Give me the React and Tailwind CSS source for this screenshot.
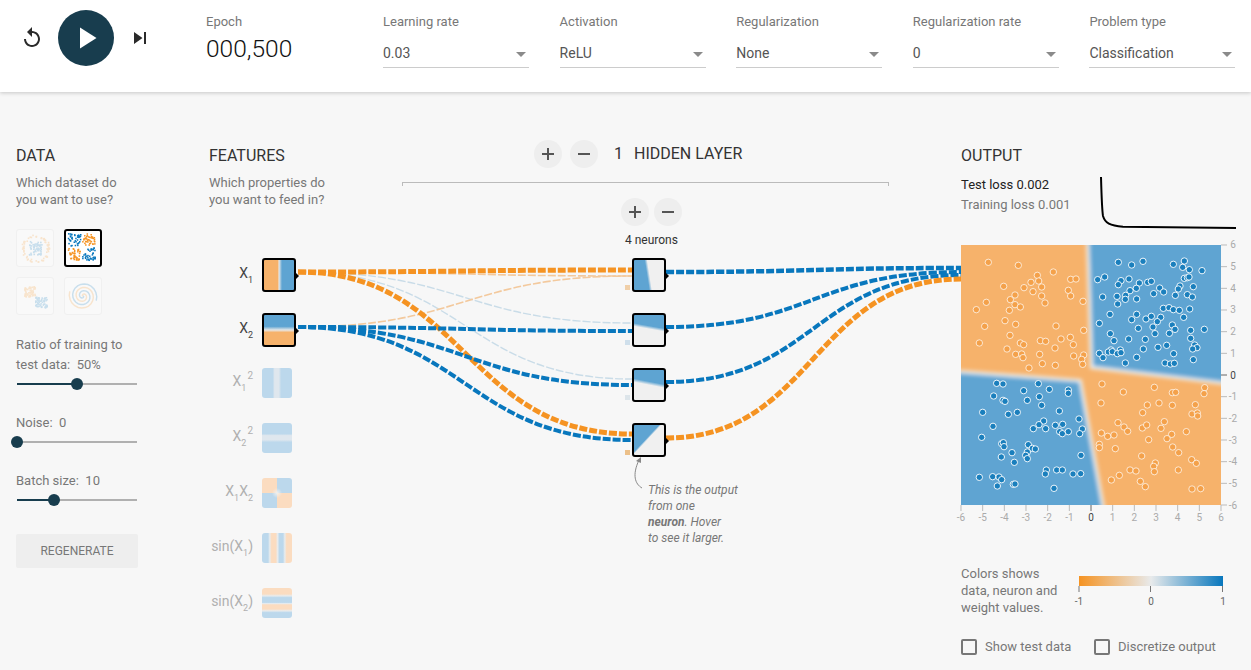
import React from "react";

const BLUE = "#0877bd";
const ORANGE = "#f59322";

// link geometry in page coordinates, same as the d3 diagonal the original draws
const LINKS = [
  [298, 272, 632, 276, "#f3c99d", 1.6],
  [298, 272, 632, 323, "#c9dce8", 1.4],
  [298, 272, 632, 379, "#c9dce8", 1.4],
  [298, 327, 632, 276, "#f3c99d", 1.6],
  [298, 272, 632, 270, ORANGE, 5],
  [298, 272, 632, 434, ORANGE, 5],
  [298, 327, 632, 331, BLUE, 4],
  [298, 327, 632, 385, BLUE, 4],
  [298, 327, 632, 440, BLUE, 4],
  [666, 272, 961, 268, BLUE, 4.5],
  [666, 327, 961, 272, BLUE, 4],
  [666, 382, 961, 275, BLUE, 4],
  [666, 438, 961, 279, ORANGE, 5],
];

// crop coords from the screenshot, upper part of the plot
const UPPER_ORANGE = [[115,277],[205,286],[310,306],[262,316],[243,337],[266,333],[222,353],[275,351],[161,349],[362,328],[378,327],[355,361],[249,365],[195,375],[275,378],[362,378],[181,389],[109,397],[285,399],[399,394],[195,404],[211,411],[79,419],[178,421],[165,452],[197,463],[104,469],[318,468],[401,481],[180,496],[333,507],[361,502],[88,519],[271,512],[287,514],[211,519],[221,524],[370,524],[315,534],[171,537]];
const UPPER_BLUE = [[505,277],[545,285],[579,274],[670,283],[703,273],[698,292],[718,299],[756,302],[443,329],[464,321],[513,332],[537,327],[505,344],[568,339],[593,337],[604,334],[703,325],[712,323],[717,321],[690,348],[685,357],[730,350],[629,354],[559,355],[540,362],[611,371],[641,366],[676,376],[712,374],[727,381],[527,376],[458,381],[501,379],[526,388],[560,387],[503,402],[640,415],[657,413],[670,419],[688,421],[719,417],[480,433],[560,433],[545,449],[588,447],[604,439],[632,442],[701,442],[622,455],[448,460],[667,465],[609,471],[565,475],[675,478],[763,478],[722,481],[615,491],[658,490],[481,491],[492,512],[536,507],[586,508],[722,505],[734,525],[650,526],[624,532],[741,533],[580,537],[728,537],[483,540],[511,540]];
const LOWER_ORANGE = [[197,13],[215,12],[219,23],[269,13],[277,41],[237,54],[316,46],[371,18],[401,15],[395,28],[398,43],[456,102],[520,126],[613,112],[667,128],[677,127],[764,113],[762,131],[453,159],[592,165],[627,159],[667,166],[736,164],[578,188],[726,192],[742,189],[743,198],[643,215],[504,218],[522,231],[533,244],[577,234],[590,225],[633,235],[709,245],[454,249],[473,259],[492,255],[665,253],[651,266],[596,269],[668,291],[448,283],[448,293],[496,296],[686,308],[575,318],[725,329],[739,340],[616,339],[611,349],[613,365],[540,360],[558,363],[685,360],[508,376],[484,390],[571,394],[586,410],[726,417],[752,416]];
const LOWER_BLUE = [[448,10],[459,23],[475,6],[487,5],[502,11],[513,8],[526,39],[560,22],[671,11],[645,39],[661,42],[673,40],[730,29],[140,100],[159,102],[265,101],[298,118],[221,122],[131,138],[159,151],[165,154],[268,140],[232,151],[355,120],[355,130],[275,166],[98,187],[175,193],[202,187],[328,183],[387,207],[281,213],[267,224],[129,229],[250,236],[287,236],[316,226],[338,223],[329,245],[337,251],[355,245],[397,237],[389,251],[95,262],[155,281],[160,278],[162,290],[235,284],[247,295],[256,297],[186,308],[232,306],[227,316],[232,326],[154,321],[393,316],[193,337],[289,360],[286,372],[320,360],[337,360],[369,372],[392,371],[88,382],[128,380],[147,381],[155,389],[142,408],[190,403],[195,402],[312,415]];

const upper = ([x, y]) => [950 + x / 3, 170 + y / 3];
const lower = ([x, y]) => [950 + x / 3, 350 + y / 3];
const ORANGE_POINTS = [...UPPER_ORANGE.map(upper), ...LOWER_ORANGE.map(lower)];
const BLUE_POINTS = [...UPPER_BLUE.map(upper), ...LOWER_BLUE.map(lower)];

const rand = (seed) => {
  let s = seed;
  return () => {
    s = (s * 16807) % 2147483647;
    return s / 2147483647;
  };
};

const scatter = (seed, n, cx, cy, w, h) => {
  const r = rand(seed);
  return Array.from({ length: n }, () => [cx + (r() - 0.5) * w, cy + (r() - 0.5) * h]);
};

const ring = (seed, n, rad) => {
  const r = rand(seed);
  return Array.from({ length: n }, () => {
    const a = r() * 6.283;
    const d = rad + r() * 3;
    return [19 + Math.cos(a) * d, 19 + Math.sin(a) * d];
  });
};

const Dots = ({ pts, color }) =>
  pts.map(([x, y], i) => <rect key={i} x={x} y={y} width="1.7" height="1.7" fill={color} />);

const spiral = (phase) => {
  let d = "";
  for (let t = 0; t < 13; t += 0.3) {
    const r = t * 1.15;
    d += `${d ? "L" : "M"}${(19 + Math.cos(t + phase) * r).toFixed(1)} ${(19 + Math.sin(t + phase) * r).toFixed(1)}`;
  }
  return d;
};

const Thumb = ({ children, active }) => (
  <div
    className={
      active
        ? "w-[38px] h-[38px] rounded-[3px] border-[2.5px] border-black bg-white overflow-hidden"
        : "w-[38px] h-[38px] rounded-[3px] border border-[#f0f0f0] bg-[#f9f9f9] overflow-hidden"
    }
  >
    <svg viewBox="0 0 38 38" className={active ? "w-full h-full" : "w-full h-full opacity-20"}>
      {children}
    </svg>
  </div>
);

const Slider = ({ label, fill, thumb }) => (
  <div>
    <div className="text-[#777] text-[13px] leading-[20px]">{label}</div>
    <div className="relative h-4 w-[120px] ml-px mt-px">
      <div className="absolute left-0 right-0 top-[7px] h-[2px] bg-[#b0b0b0]" />
      <div className={`absolute left-0 top-[7px] h-[2px] bg-[#183d4e] ${fill}`} />
      <div className={`absolute top-[2px] w-3 h-3 rounded-full bg-[#183d4e] ${thumb}`} />
    </div>
  </div>
);

const Dropdown = ({ label, value }) => (
  <div className="w-[176.6px] shrink-0">
    <div className="w-[146px]">
      <div className="text-[13px] leading-4 text-[#777]">{label}</div>
      <div className="flex items-center justify-between h-[28px] mt-[10px] border-b border-[#cccccc] text-[14px] text-[#555]">
        <span>{value}</span>
        <span className="w-0 h-0 mr-[3px] mt-[2px] border-x-[5px] border-x-transparent border-t-[5px] border-t-[#8a8a8a]" />
      </div>
    </div>
  </div>
);

const RoundButton = ({ minus }) => (
  <button className="w-7 h-7 rounded-full bg-[#eeeeee] flex items-center justify-center">
    <svg width="24" height="24" viewBox="0 0 24 24" fill="#555">
      <path d={minus ? "M6 11h12v2H6z" : "M18 13h-5v5h-2v-5H6v-2h5V6h2v5h5z"} />
    </svg>
  </button>
);

const Sub = ({ children }) => <sub className="text-[9px] -bottom-[5px]">{children}</sub>;
const Sup = ({ children }) => <sup className="text-[10px] -top-[7px] ml-px">{children}</sup>;

const FEATURES = [
  { label: <>X<Sub>1</Sub></>, on: true, bg: "bg-[linear-gradient(90deg,#f6b26b_46%,#e6e8e8_50%,#5ea4d2_60%)]" },
  { label: <>X<Sub>2</Sub></>, on: true, bg: "bg-[linear-gradient(180deg,#5ea4d2_38%,#e6e8e8_50%,#f6b26b_58%)]" },
  { label: <>X<Sub>1</Sub><Sup>2</Sup></>, bg: "bg-[linear-gradient(90deg,#bcd8ec_36%,#dfe7ee_42%,#dfe7ee_56%,#bcd8ec_64%)]" },
  { label: <>X<Sub>2</Sub><Sup>2</Sup></>, bg: "bg-[linear-gradient(180deg,#bcd8ec_36%,#dfe7ee_42%,#dfe7ee_56%,#bcd8ec_64%)]" },
  { label: <>X<Sub>1</Sub>X<Sub>2</Sub></>, bg: "bg-[radial-gradient(circle,#f0f0ee_0,transparent_24%),conic-gradient(#bcd8ec_0_25%,#fbdcc0_25%_50%,#bcd8ec_50%_75%,#fbdcc0_75%)]" },
  { label: <>sin(X<Sub>1</Sub>)</>, bg: "bg-[linear-gradient(90deg,#bcd8ec_20%,#e8ecee_26%,#fbdcc0_32%,#fbdcc0_46%,#e8ecee_52%,#bcd8ec_58%,#bcd8ec_70%,#e8ecee_76%,#fbdcc0_82%)]" },
  { label: <>sin(X<Sub>2</Sub>)</>, bg: "bg-[linear-gradient(180deg,#fbdcc0_20%,#e8ecee_26%,#bcd8ec_32%,#bcd8ec_48%,#e8ecee_52%,#fbdcc0_56%,#fbdcc0_70%,#e8ecee_76%,#bcd8ec_82%)]" },
];

const NEURONS = [
  { bg: "bg-[linear-gradient(81deg,#5ea4d2_44%,#f0f0f0_52%)]", mark: "bg-[#f0cfa8]" },
  { bg: "bg-[linear-gradient(190deg,#5ea4d2_38%,#f0f0f0_47%)]", mark: "bg-[#cfdfeb]" },
  { bg: "bg-[linear-gradient(191deg,#5ea4d2_40%,#f0f0f0_50%)]", mark: "bg-[#dde5ea]" },
  { bg: "bg-[linear-gradient(133deg,#5ea4d2_43%,#f0f0f0_47%)]", mark: "bg-[#ecc089]" },
];

const Caret = () => (
  <span className="absolute -right-[5px] top-[11px] w-0 h-0 border-y-[5px] border-y-transparent border-l-[5px] border-l-black" />
);

const TICKS = [-6, -5, -4, -3, -2, -1, 0, 1, 2, 3, 4, 5, 6];

export default function App() {
  return (
    <div className="min-h-screen h-[670px] overflow-hidden bg-[#f7f7f7] [font-family:Roboto,sans-serif]">
      {/* Top bar */}
      <header className="h-[92px] bg-white shadow-[0_1px_4px_rgba(0,0,0,0.2)] flex relative z-10">
        <div className="flex items-center h-[76px] pl-5 w-[206px] shrink-0">
          <svg width="24" height="24" viewBox="0 0 24 24" fill="#2a2a2a">
            <path d="M12 5V1L7 6l5 5V7c3.31 0 6 2.69 6 6s-2.69 6-6 6-6-2.69-6-6H4c0 4.42 3.58 8 8 8s8-3.58 8-8-3.58-8-8-8z" />
          </svg>
          <button className="w-14 h-14 ml-[14px] rounded-full bg-[#183d4e] flex items-center justify-center">
            <svg width="36" height="36" viewBox="0 0 24 24" fill="#fff">
              <path d="M8 5v14l11-7z" />
            </svg>
          </button>
          <svg className="ml-[14px]" width="24" height="24" viewBox="0 0 24 24" fill="#2a2a2a">
            <path d="M6 18l8.5-6L6 6v12zM16 6v12h2V6h-2z" />
          </svg>
        </div>
        <div className="w-[177px] shrink-0 pt-[14px]">
          <div className="text-[13px] leading-4 text-[#777]">Epoch</div>
          <div className="text-[24.500px] leading-7 mt-[5px] font-light text-[#111]">000,500</div>
        </div>
        <div className="flex pt-[14px]">
          <Dropdown label="Learning rate" value="0.03" />
          <Dropdown label="Activation" value="ReLU" />
          <Dropdown label="Regularization" value="None" />
          <Dropdown label="Regularization rate" value="0" />
          <Dropdown label="Problem type" value="Classification" />
        </div>
      </header>

      <main className="flex pt-[54px]">
        {/* Data */}
        <section className="w-[209px] shrink-0 pl-4">
          <h2 className="text-[16px] leading-[19px] text-[#333]">DATA</h2>
          <p className="mt-[9px] text-[13px] leading-[17px] text-[#777]">
            Which dataset do
            <br />
            you want to use?
          </p>
          <div className="mt-[21px] grid grid-cols-[38px_38px] gap-x-[10px] gap-y-[10px]">
            <Thumb>
              <Dots pts={ring(11, 70, 12)} color={ORANGE} />
              <Dots pts={scatter(7, 60, 19, 19, 13, 15)} color={BLUE} />
            </Thumb>
            <Thumb active>
              <Dots pts={scatter(3, 40, 9, 9, 14, 14)} color={BLUE} />
              <Dots pts={scatter(5, 40, 25, 9, 14, 14)} color={ORANGE} />
              <Dots pts={scatter(9, 40, 9, 25, 14, 14)} color={ORANGE} />
              <Dots pts={scatter(13, 40, 25, 25, 14, 14)} color={BLUE} />
            </Thumb>
            <Thumb>
              <Dots pts={scatter(17, 60, 13, 14, 11, 11)} color={ORANGE} />
              <Dots pts={scatter(19, 60, 25, 25, 12, 11)} color={BLUE} />
            </Thumb>
            <Thumb>
              <path d={spiral(0)} fill="none" stroke={BLUE} strokeWidth="1.5" />
              <path d={spiral(3.14)} fill="none" stroke={ORANGE} strokeWidth="1.5" />
            </Thumb>
          </div>
          <div className="mt-5">
            <Slider
              label={
                <>
                  Ratio of training to
                  <br />
                  test data:&nbsp; 50%
                </>
              }
              fill="w-[60px]"
              thumb="left-[54px]"
            />
          </div>
          <div className="mt-[21px]">
            <Slider label="Noise:&nbsp; 0" fill="w-0" thumb="-left-[6px]" />
          </div>
          <div className="mt-[21px]">
            <Slider label="Batch size:&nbsp; 10" fill="w-[37px]" thumb="left-[31px]" />
          </div>
          <button className="mt-[26px] w-[122px] h-[34px] rounded-[2px] bg-[#eeeeee] text-[12px] text-[#777]">
            REGENERATE
          </button>
        </section>

        {/* Network */}
        <section className="relative w-[752px] shrink-0 flex">
          <svg className="absolute left-0 -top-[146px] pointer-events-none" width="752" height="670" viewBox="209 0 752 670">
            {LINKS.map(([x1, y1, x2, y2, color, w], i) => {
              const mid = (x1 + x2) / 2;
              return (
                <path
                  key={i}
                  d={`M${x1} ${y1}C${mid} ${y1} ${mid} ${y2} ${x2} ${y2}`}
                  fill="none"
                  stroke={color}
                  strokeWidth={w}
                  strokeDasharray="8 2"
                />
              );
            })}
          </svg>

          <div className="relative w-[193px] shrink-0">
            <h2 className="text-[16px] leading-[19px] text-[#333]">FEATURES</h2>
            <p className="mt-[9px] text-[13px] leading-[17px] text-[#777]">
              Which properties do
              <br />
              you want to feed in?
            </p>
            <div className="mt-[50px]">
              {FEATURES.map((f, i) => (
                <div key={i} className="h-[55px] flex items-start">
                  <div
                    className={
                      f.on
                        ? "w-[44px] h-[34px] flex items-center justify-end text-[14px] text-[#444] pb-[4px]"
                        : "w-[44px] h-[30px] flex items-center justify-end text-[14px] text-[#b0b0b0] pb-[4px]"
                    }
                  >
                    <span className="whitespace-nowrap">{f.label}</span>
                  </div>
                  <div
                    className={
                      f.on
                        ? `relative ml-[9px] w-[34px] h-[34px] rounded-[3px] border-[2.5px] border-black ${f.bg}`
                        : `ml-[9px] w-[30px] h-[30px] rounded-[3px] ${f.bg}`
                    }
                  >
                    {f.on && <Caret />}
                  </div>
                </div>
              ))}
            </div>
          </div>

          <div className="relative w-[487px] shrink-0 -mt-[6px]">
            <div className="flex items-center gap-2 pl-[132px]">
              <RoundButton />
              <RoundButton minus />
              <span className="ml-[8px] text-[16px] text-[#333]">1</span>
              <span className="ml-[3px] text-[16px] text-[#333]">HIDDEN LAYER</span>
            </div>
            <div className="mt-[14px] h-[4px] border-t border-x border-[#bbbbbb]" />
            <div className="mt-3 pl-[219px] flex gap-[5px]">
              <RoundButton />
              <RoundButton minus />
            </div>
            <div className="mt-[6px] pl-[223px] text-[12px] leading-4 text-[#333]">4 neurons</div>
            <div className="mt-[10px] pl-[230px]">
              {NEURONS.map((n, i) => (
                <div key={i} className="h-[55px]">
                  <div className={`relative w-[34px] h-[34px] rounded-[3px] border-[2.5px] border-black ${n.bg}`}>
                    <Caret />
                    <span className={`absolute -left-[9px] bottom-0 w-[5px] h-[5px] ${n.mark}`} />
                  </div>
                </div>
              ))}
            </div>
            <svg className="absolute left-[226px] top-[315px]" width="20" height="36" viewBox="0 0 20 36" fill="none">
              <path d="M14 33C7 29 4 20 11 5" stroke="#888" strokeWidth="1" />
              <path d="M13 2L8 6l5 2z" fill="#888" />
            </svg>
            <p className="mt-1 pl-[246px] text-[12px] leading-4 italic text-[#777] whitespace-nowrap">
              This is the output
              <br />
              from one
              <br />
              <b>neuron</b>. Hover
              <br />
              to see it larger.
            </p>
          </div>
        </section>

        {/* Output */}
        <section className="w-[290px] shrink-0">
          <h2 className="text-[16px] leading-[19px] text-[#333]">OUTPUT</h2>
          <div className="mt-[10px] flex h-[65px]">
            <div className="w-[137px] shrink-0 text-[13px] leading-5">
              <div className="text-[#222]">Test loss 0.002</div>
              <div className="text-[#777]">Training loss 0.001</div>
            </div>
            <svg width="142" height="60" viewBox="1098 175 142 60" fill="none">
              <path d="M1101 177C1101.500 195 1102 210 1103 216C1105 223 1110 225.500 1123 226.700L1236 228" stroke="#000" strokeWidth="2" />
            </svg>
          </div>
          <svg className="block -ml-[6px]" width="290" height="290" viewBox="955 240 290 290">
            <defs>
              <filter id="soft" x="-10%" y="-10%" width="120%" height="120%">
                <feGaussianBlur stdDeviation="2.2" />
              </filter>
              <clipPath id="plot">
                <rect x="961" y="245" width="260" height="260" />
              </clipPath>
            </defs>
            <g clipPath="url(#plot)">
              <rect x="961" y="245" width="260" height="260" fill="#f6b26b" />
              <g filter="url(#soft)">
                <polygon points="1089,235 1235,235 1235,383 1093,366" fill="#eef2f4" stroke="#eef2f4" strokeWidth="6" />
                <polygon points="945,372 1079,382 1104,520 945,520" fill="#eef2f4" stroke="#eef2f4" strokeWidth="6" />
                <polygon points="1089,235 1235,235 1235,383 1093,366" fill="#5ea4d2" />
                <polygon points="945,372 1079,382 1104,520 945,520" fill="#5ea4d2" />
              </g>
            </g>
            {ORANGE_POINTS.map(([x, y], i) => (
              <circle key={i} cx={x} cy={y} r="3.2" fill="#f4a14a" stroke="#fff" strokeOpacity="0.8" strokeWidth="0.9" />
            ))}
            {BLUE_POINTS.map(([x, y], i) => (
              <circle key={i} cx={x} cy={y} r="3.2" fill="#1a7fbd" stroke="#fff" strokeWidth="0.9" />
            ))}
            {TICKS.map((t) => {
              const x = 1091 + t * 21.667;
              const y = 375 - t * 21.667;
              const c = t === 0 ? "#666" : "#bbb";
              const tc = t === 0 ? "#444" : "#aaa";
              return (
                <g key={t} fontSize="10" fontFamily="Roboto, sans-serif">
                  <path d={`M${x} 505v6M1221 ${y}h6`} stroke={c} />
                  <text x={x} y="521" textAnchor="middle" fill={tc}>{t}</text>
                  <text x="1233" y={y + 3.500} textAnchor="middle" fill={tc}>{t}</text>
                </g>
              );
            })}
          </svg>
          <div className="mt-[35px] flex h-[51px]">
            <p className="w-[109px] shrink-0 text-[13px] leading-[17px] text-[#777]">
              Colors shows
              <br />
              data, neuron and
              <br />
              weight values.
            </p>
            <svg width="170" height="50" viewBox="1070 565 170 50">
              <defs>
                <linearGradient id="scale">
                  <stop offset="0" stopColor={ORANGE} />
                  <stop offset="0.5" stopColor="#e8eaeb" />
                  <stop offset="1" stopColor={BLUE} />
                </linearGradient>
              </defs>
              <rect x="1079" y="576" width="144" height="10" fill="url(#scale)" />
              <path d="M1079 586v6M1150.500 586v6M1222.500 586v6" stroke="#777" />
              <g fontSize="10" fill="#666" fontFamily="Roboto, sans-serif" textAnchor="middle">
                <text x="1079" y="605">-1</text>
                <text x="1151" y="605">0</text>
                <text x="1223" y="605">1</text>
              </g>
            </svg>
          </div>
          <div className="mt-[21px] flex text-[13px] text-[#777]">
            <label className="flex items-center gap-2 w-[133px]">
              <span className="w-4 h-4 rounded-[2px] border-2 border-[#777]" />
              Show test data
            </label>
            <label className="flex items-center gap-2">
              <span className="w-4 h-4 rounded-[2px] border-2 border-[#777]" />
              Discretize output
            </label>
          </div>
        </section>
      </main>
    </div>
  );
}
